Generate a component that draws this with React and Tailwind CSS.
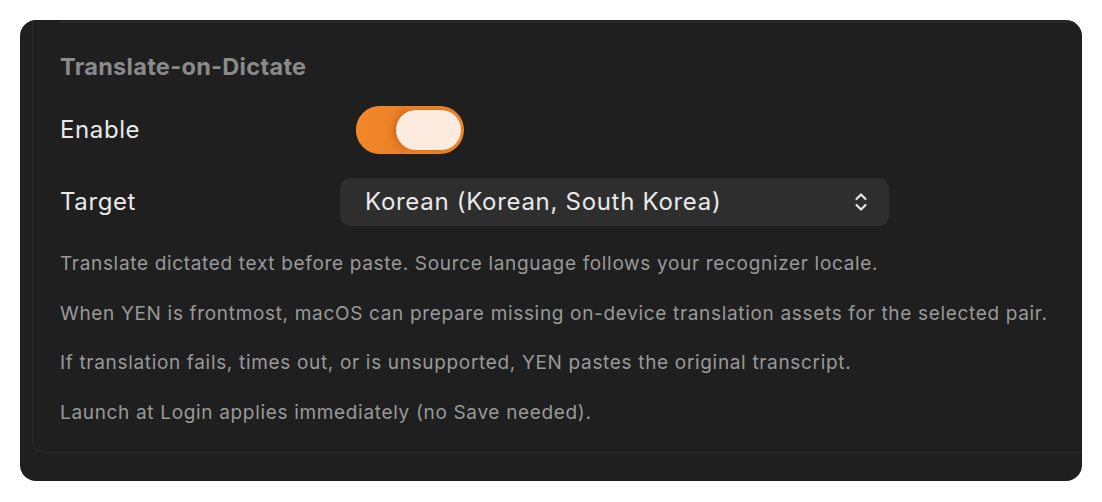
const notes = [
  'Translate dictated text before paste. Source language follows your recognizer locale.',
  'When YEN is frontmost, macOS can prepare missing on-device translation assets for the selected pair.',
  'If translation fails, times out, or is unsupported, YEN pastes the original transcript.',
  'Launch at Login applies immediately (no Save needed).',
];

const UpDown = () => (
  <svg width="14" height="22" viewBox="0 0 14 22" fill="none" stroke="#e6e6e6" strokeWidth="2.2" strokeLinecap="round" strokeLinejoin="round">
    <path d="M2.5 8 L7 3.5 L11.5 8" />
    <path d="M2.5 14 L7 18.5 L11.5 14" />
  </svg>
);

const App = () => {
  return (
    <div className="w-[1102px] h-[502px] bg-white pt-[20px] pl-[20px]" style={{ fontFamily: 'Inter, "Noto Sans", sans-serif' }}>
      <div className="w-[1062px] h-[461px] bg-[#1f1f1f] rounded-[16px] overflow-hidden">
        <div className="ml-[12px] -mt-[8px] -mr-[20px] border border-[#2b2b2b] rounded-[12px] pl-[27px] pb-[27px]">
          <div className="mt-[8px] h-[2px] bg-[#2a2a2a]" />

          <h2 className="mt-[30px] text-[23.5px] leading-[28px] font-bold tracking-[0.3px] text-[#8a8a8a]">
            Translate-on-Dictate
          </h2>

          <div className="mt-[25px] flex items-center h-[48px]">
            <span className="w-[296px] text-[24px] tracking-[0.6px] text-[#e9e9e9]">Enable</span>
            <button className="relative w-[108px] h-[48px] rounded-full bg-[#f3862a] flex items-center justify-end pr-[3px]">
              <span className="absolute left-0 top-0 h-full w-[50px] rounded-l-full bg-gradient-to-r from-[#f48a2b] to-[#e37a22] opacity-60" />
              <span className="relative w-[65px] h-[40px] rounded-full bg-[#fdebdf] shadow-[-2px_0_6px_rgba(120,50,0,0.35)]" />
            </button>
          </div>

          <div className="mt-[24px] flex items-center h-[48px]">
            <span className="w-[280px] text-[24px] tracking-[0.6px] text-[#e9e9e9]">Target</span>
            <div className="w-[549px] h-[48px] rounded-[10px] bg-[#2e2e2e] flex items-center justify-between pl-[25px] pr-[21px]">
              <span className="text-[24px] tracking-[0.7px] text-[#e9e9e9]">Korean (Korean, South Korea)</span>
              <UpDown />
            </div>
          </div>

          <div className="mt-[26px] flex flex-col gap-[25.5px]">
            {notes.map((n) => (
              <p key={n} className="text-[19px] leading-[24px] tracking-[0.67px] text-[#999999] whitespace-nowrap">
                {n}
              </p>
            ))}
          </div>
        </div>
      </div>
    </div>
  );
};

export default App;
